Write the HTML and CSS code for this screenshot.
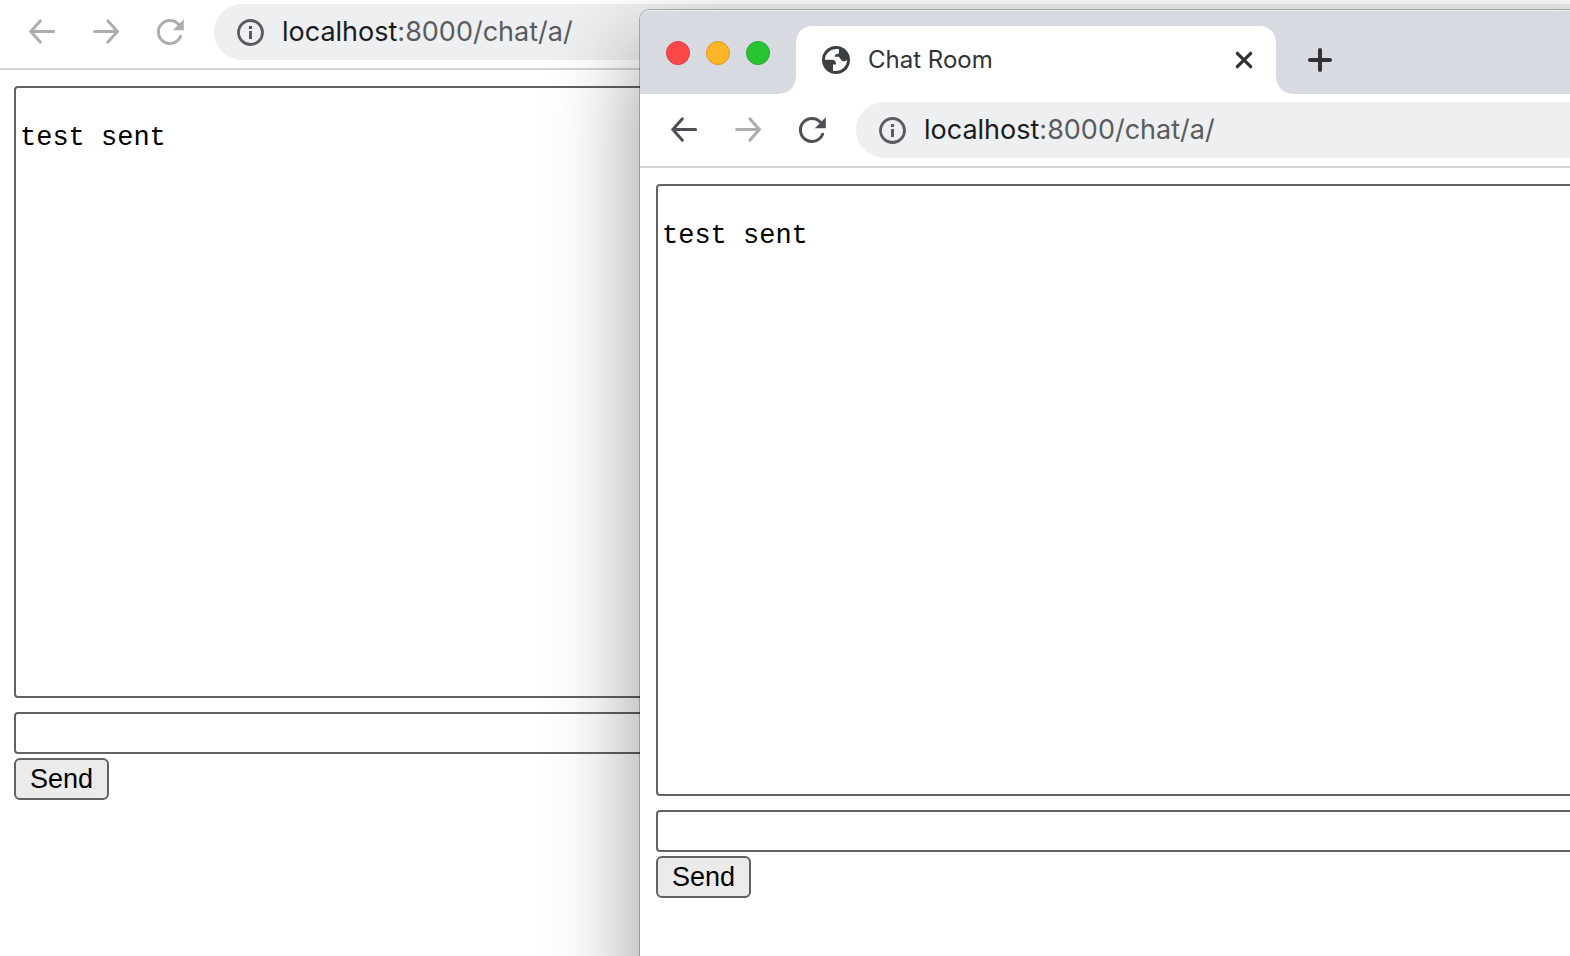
FILE: index.html
```html
<!DOCTYPE html>
<html lang="en">
<head>
<meta charset="utf-8">
<title>Chat Room</title>
<link rel="stylesheet" href="styles.css">
</head>
<body>
<svg class="sprite" aria-hidden="true">
  <symbol id="back" viewBox="0 0 32 32"><path d="M27.6 15.5H5M14.4 4.8L4.8 15.5L14.4 26.2" fill="none" stroke="currentColor" stroke-width="3" stroke-linecap="round" stroke-linejoin="miter"/></symbol>
  <symbol id="forward" viewBox="0 0 32 32"><path d="M4.6 15.5H27M17.8 4.8L27.4 15.5L17.8 26.2" fill="none" stroke="currentColor" stroke-width="3" stroke-linecap="round" stroke-linejoin="miter"/></symbol>
  <symbol id="reload" viewBox="0 0 32 32"><path d="M26.6 20.2A11.5 11.5 0 1 1 24.5 8.3" fill="none" stroke="currentColor" stroke-width="3" stroke-linecap="round"/><path d="M29.8 3.2V14.2H18.8Z" fill="currentColor"/></symbol>
  <symbol id="info" viewBox="0 0 28 28"><circle cx="14.5" cy="14.500" r="12" fill="none" stroke="currentColor" stroke-width="2.8"/><path d="M13 8h3v3h-3zM13 13h3v8h-3z" fill="currentColor"/></symbol>
</svg>

<main class="desktop">
  <section class="window window-rear" aria-label="First chat window">
    <div class="toolbar">
      <button class="nav dim" aria-label="Back"><svg><use href="#back"/></svg></button>
      <button class="nav dim" aria-label="Forward"><svg><use href="#forward"/></svg></button>
      <button class="nav dim" aria-label="Reload"><svg><use href="#reload"/></svg></button>
      <div class="omnibox">
        <svg class="info"><use href="#info"/></svg>
        <span class="url"><span class="host">localhost</span>:8000/chat/a/</span>
      </div>
    </div>
    <form class="page">
      <textarea class="log" aria-label="Chat log">

test sent</textarea>
      <input class="message" type="text" aria-label="Message">
      <button class="send" type="button">Send</button>
    </form>
  </section>

  <section class="window window-front" aria-label="Second chat window">
    <div class="tabstrip">
      <div class="lights">
        <button class="light red" aria-label="Close window"></button>
        <button class="light amber" aria-label="Minimize window"></button>
        <button class="light green" aria-label="Zoom window"></button>
      </div>
      <div class="tab">
        <svg class="globe" viewBox="0 0 28 28"><circle cx="14" cy="14" r="14" fill="#3c4043"/><path d="M17 3.200C9.500 1.800 3 7 2.900 13.800H9.500C12.500 13.800 14.300 15.600 14 18.400H11V24.800C18 26.200 25 21.200 25.100 14C24 15.200 22.500 15.500 20.800 15C18.500 14.400 18.300 12 16.500 10.800H12.500C12.700 8.800 14 8 16.800 7.600Z" fill="#fff"/></svg>
        <span class="title">Chat Room</span>
        <button class="close" aria-label="Close tab"><svg viewBox="0 0 18 18"><path d="M2.300 2.300L15.700 15.700M15.700 2.300L2.300 15.700" stroke="currentColor" stroke-width="3.200" stroke-linecap="round"/></svg></button>
      </div>
      <button class="newtab" aria-label="New tab"><svg viewBox="0 0 24 24"><path d="M12 2V22M2 12H22" stroke="currentColor" stroke-width="4" stroke-linecap="round"/></svg></button>
    </div>
    <div class="toolbar">
      <button class="nav" aria-label="Back"><svg><use href="#back"/></svg></button>
      <button class="nav dim" aria-label="Forward"><svg><use href="#forward"/></svg></button>
      <button class="nav" aria-label="Reload"><svg><use href="#reload"/></svg></button>
      <div class="omnibox">
        <svg class="info"><use href="#info"/></svg>
        <span class="url"><span class="host">localhost</span>:8000/chat/a/</span>
      </div>
    </div>
    <form class="page">
      <textarea class="log" aria-label="Chat log">

test sent</textarea>
      <input class="message" type="text" aria-label="Message">
      <button class="send" type="button">Send</button>
    </form>
  </section>
</main>
</body>
</html>
```
FILE: styles.css
```css
* { box-sizing: border-box; }
html, body { height: 100%; }
body { margin: 0; font-family: Inter, "Liberation Sans", sans-serif; }
button { border: 0; padding: 0; background: none; color: inherit; }
svg { display: block; }
.sprite { position: absolute; width: 0; height: 0; }

.desktop { position: relative; height: 100vh; overflow: hidden; background: #fff; }

/* Windows float freely on the desktop and run past its edges */
.window { position: absolute; bottom: -60px; right: -60px; background: #fff; }
.window-rear { left: -2px; top: -4px; }
.window-front {
  left: 640px;
  top: 10px;
  border-radius: 10px 0 0 0;
  box-shadow: 0 0 0 1px rgba(0, 0, 0, .25), 0 36px 92px rgba(0, 0, 0, .42);
}

.tabstrip {
  display: flex;
  align-items: flex-end;
  height: 84px;
  padding-left: 26px;
  background: #d7dae1;
  border-radius: 10px 0 0 0;
  box-shadow: inset 0 2px 0 -1px #eceef2;
}
.lights { display: flex; gap: 16px; padding-bottom: 29px; margin-right: 26px; }
.light { width: 24px; height: 24px; border-radius: 50%; border: 1px solid; }
.red { background: #fd4848; border-color: #e0383c; }
.amber { background: #fdb427; border-color: #dd9a20; }
.green { background: #28c331; border-color: #1ea628; }

.tab {
  position: relative;
  display: flex;
  align-items: center;
  width: 480px;
  height: 68px;
  padding: 0 23px 0 26px;
  background: #fff;
  border-radius: 16px 16px 0 0;
}
.tab::before, .tab::after {
  content: "";
  position: absolute;
  bottom: 0;
  width: 16px;
  height: 16px;
}
.tab::before { right: 100%; background: radial-gradient(circle at 0 0, transparent 15px, #fff 16px); }
.tab::after { left: 100%; background: radial-gradient(circle at 100% 0, transparent 15px, #fff 16px); }
.globe { width: 28px; height: 28px; }
.title { flex: 1; margin-left: 18px; font-size: 24px; line-height: 32px; color: #303236; }
.close { color: #303236; }
.close svg { width: 18px; height: 18px; }
.newtab { align-self: flex-end; margin: 0 0 22px 32px; color: #303236; }
.newtab svg { width: 24px; height: 24px; }

.toolbar {
  display: flex;
  align-items: center;
  gap: 32px;
  height: 74px;
  padding-left: 28px;
  border-bottom: 2px solid #d1d3d6;
}
.nav { color: #4c4f54; }
.nav svg { width: 32px; height: 32px; }
.dim { color: #acadaf; }
.omnibox {
  flex: 1;
  display: flex;
  align-items: center;
  gap: 18px;
  height: 56px;
  margin-left: -4px;
  padding-left: 22px;
  border-radius: 28px;
  background: #eeeff1;
  color: #5a5b5e;
}
.info { width: 28px; height: 28px; }
.url { font-size: 27px; line-height: 36px; white-space: nowrap; }
.host { color: #1a1b1d; }

.page { display: flex; flex-direction: column; align-items: flex-start; padding: 16px; }
.log, .message {
  width: 100%;
  margin: 0;
  border: 2px solid #626262;
  border-radius: 4px;
  background: transparent;
  color: #000;
  outline: 0;
}
.log {
  height: 612px;
  padding: 4px;
  resize: none;
  overflow: hidden;
  font-family: "Liberation Mono", monospace;
  font-size: 27px;
  line-height: 31px;
}
.message { height: 42px; margin-top: 14px; padding: 2px 4px; font-size: 27px; }
.send {
  height: 42px;
  margin-top: 4px;
  padding: 0 14px;
  border: 2px solid #626262;
  border-radius: 6px;
  background: #ebebeb;
  color: #000;
  font-family: "Liberation Sans", Arial, sans-serif;
  font-size: 27px;
  line-height: 32px;
}
```
